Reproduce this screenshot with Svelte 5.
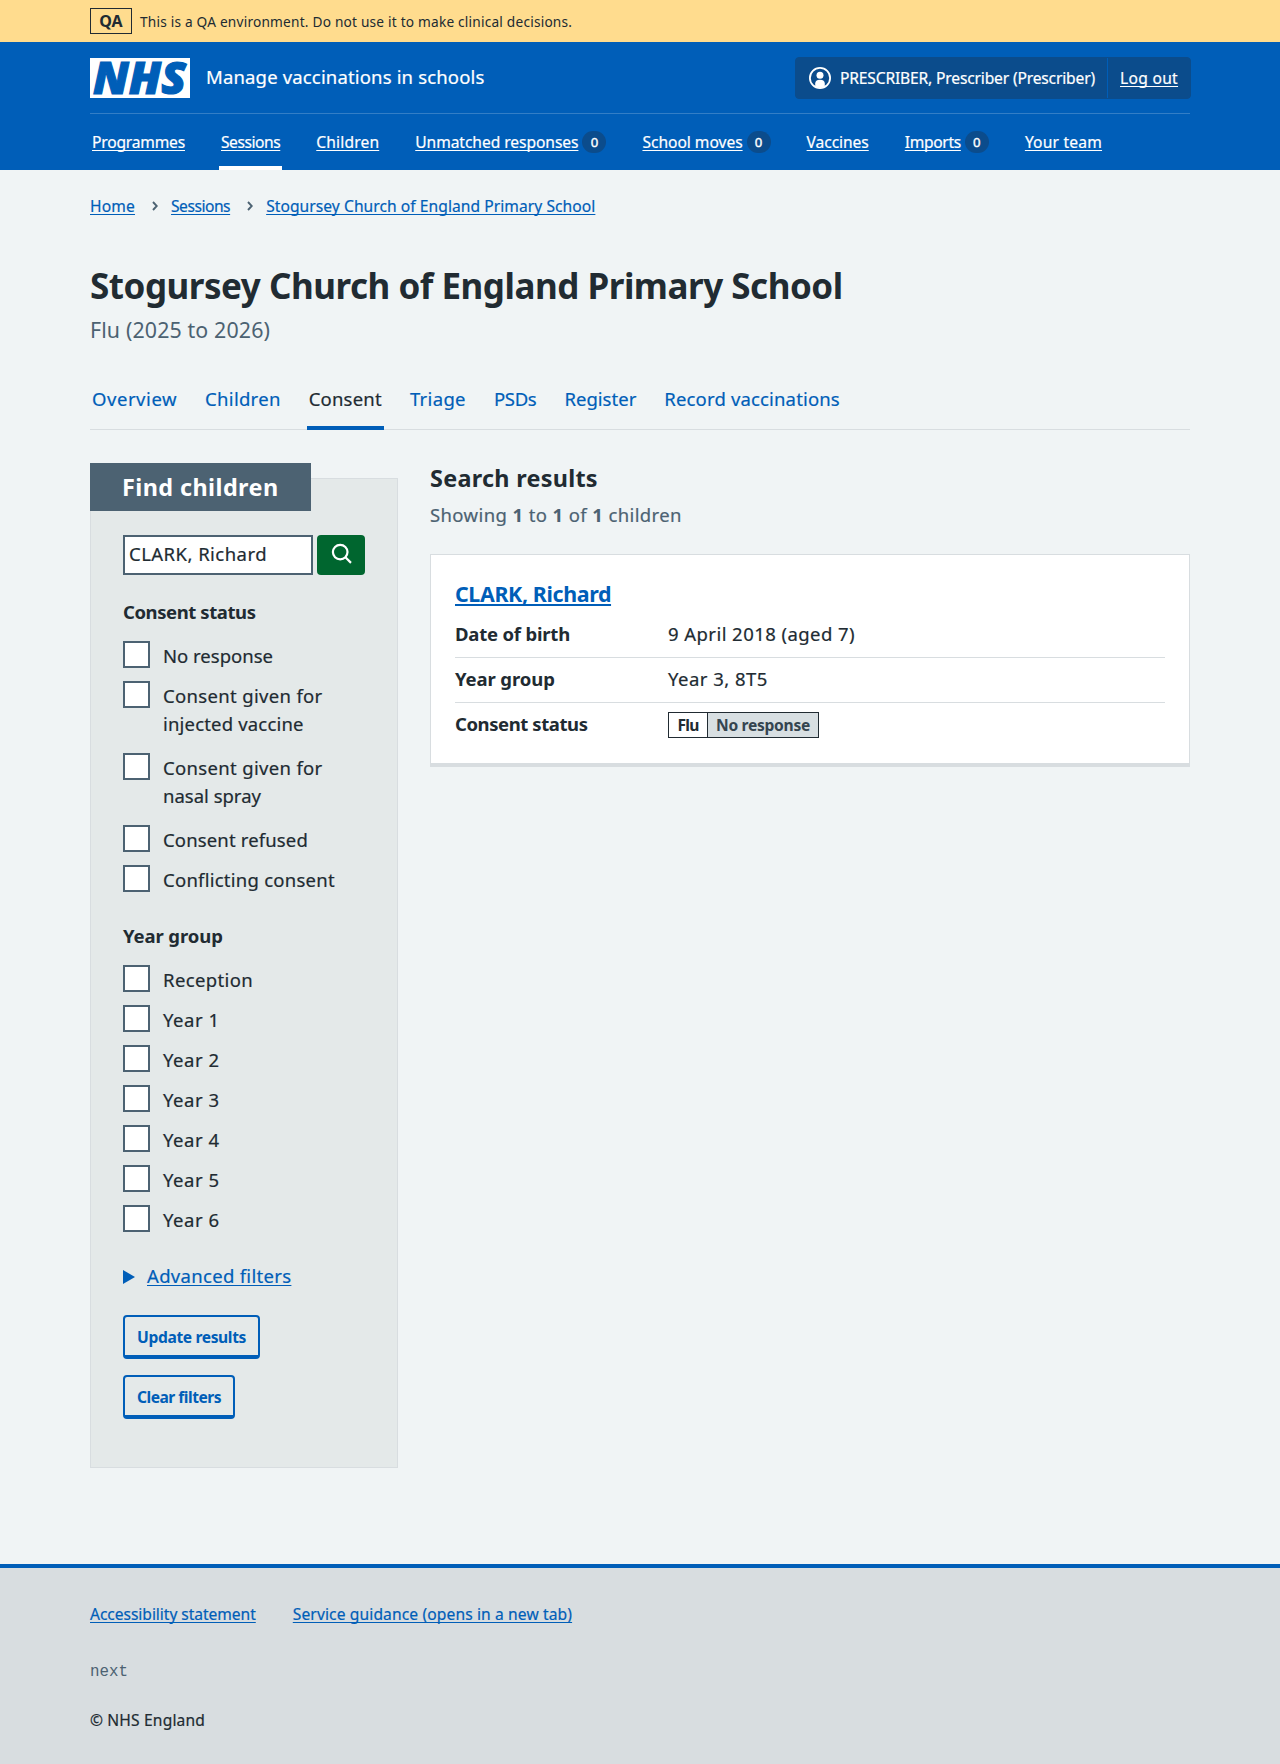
<script>
  const nav = [
    { label: 'Programmes' },
    { label: 'Sessions', current: true },
    { label: 'Children' },
    { label: 'Unmatched responses', count: 0 },
    { label: 'School moves', count: 0 },
    { label: 'Vaccines' },
    { label: 'Imports', count: 0 },
    { label: 'Your team' }
  ];
  const tabs = ['Overview', 'Children', 'Consent', 'Triage', 'PSDs', 'Register', 'Record vaccinations'];
  const crumbs = ['Home', 'Sessions', 'Stogursey Church of England Primary School'];
  const statuses = [
    { lines: ['No response'] },
    { lines: ['Consent given for', 'injected vaccine'] },
    { lines: ['Consent given for', 'nasal spray'] },
    { lines: ['Consent refused'] },
    { lines: ['Conflicting consent'] }
  ];
  const years = ['Reception', 'Year 1', 'Year 2', 'Year 3', 'Year 4', 'Year 5', 'Year 6'];
  let query = $state('CLARK, Richard');
</script>

<div class="page">
  <div class="banner">
    <div class="container banner-row">
      <strong class="env">QA</strong>
      <span class="env-text">This is a QA environment. Do not use it to make clinical decisions.</span>
    </div>
  </div>

  <header>
    <div class="container">
      <div class="header-top">
        <a class="brand" href="#home">
          <svg class="logo" viewBox="0 0 100 40" width="100" height="40" role="img" aria-label="NHS">
            <rect width="100" height="40" fill="#fff" />
            <text x="3" y="36.200" textLength="93" lengthAdjust="spacingAndGlyphs">NHS</text>
          </svg>
          <span class="service">Manage vaccinations in schools</span>
        </a>
        <div class="account">
          <div class="user">
            <svg viewBox="0 0 24 24" width="24" height="24" aria-hidden="true">
              <circle cx="12" cy="12" r="10.1" fill="none" stroke="#fff" stroke-width="1.8" />
              <circle cx="12" cy="9.2" r="3.5" fill="#fff" />
              <path d="M7.2 20.6v-3.2c0-2.3 1.6-3.7 4.8-3.7s4.8 1.4 4.8 3.7v3.2A10 10 0 0 1 12 22a10 10 0 0 1-4.800-1.400z" fill="#fff" />
            </svg>
            <span>PRESCRIBER, Prescriber (Prescriber)</span>
          </div>
          <a class="logout" href="#logout">Log out</a>
        </div>
      </div>
      <nav class="primary">
        {#each nav as item}
          <div class="nav-item" class:current={item.current}>
            <a href="#nav">{item.label}</a>
            {#if item.count !== undefined}<span class="count">{item.count}</span>{/if}
          </div>
        {/each}
      </nav>
    </div>
  </header>

  <main class="container">
    <nav class="crumbs">
      {#each crumbs as crumb, i}
        {#if i > 0}
          <svg viewBox="0 0 6 10" width="6" height="10" aria-hidden="true">
            <path d="M1 1l3.800 4-3.800 4" fill="none" stroke="#4c6272" stroke-width="1.900" />
          </svg>
        {/if}
        <a href="#crumb">{crumb}</a>
      {/each}
    </nav>

    <h1>Stogursey Church of England Primary School</h1>
    <p class="caption">Flu (2025 to 2026)</p>

    <nav class="tabs">
      {#each tabs as tab}
        <a class="tab" class:active={tab === 'Consent'} href="#tab">{tab}</a>
      {/each}
    </nav>

    <div class="columns">
      <section class="filters">
        <h2 class="filters-title">Find children</h2>
        <form class="filters-body" onsubmit={(e) => e.preventDefault()}>
          <div class="search">
            <input type="text" bind:value={query} aria-label="Search" />
            <button class="go" type="submit" aria-label="Search">
              <svg viewBox="0 0 22 22" width="22" height="22" aria-hidden="true">
                <circle cx="9.200" cy="9.100" r="7.300" />
                <path d="M14.400 14.300l5.600 5.600" />
              </svg>
            </button>
          </div>

          <h3>Consent status</h3>
          <ul class="checks status">
            {#each statuses as option}
              <li class:long={option.lines.length > 1}>
                <span class="box"></span>
                <span class="label">{#each option.lines as line}<span class="line">{line}</span>{/each}</span>
              </li>
            {/each}
          </ul>

          <h3 class="year-title">Year group</h3>
          <ul class="checks years">
            {#each years as year}
              <li><span class="box"></span><span class="label">{year}</span></li>
            {/each}
          </ul>

          <div class="advanced">
            <svg viewBox="0 0 12 14" width="12" height="14" aria-hidden="true"><path d="M0 0l12 7-12 7z" fill="#005eb8" /></svg>
            <a href="#advanced">Advanced filters</a>
          </div>

          <button class="secondary update" type="submit">Update results</button>
          <button class="secondary clear" type="reset">Clear filters</button>
        </form>
      </section>

      <section class="results">
        <h2>Search results</h2>
        <p class="showing">Showing <b>1</b> to <b>1</b> of <b>1</b> children</p>
        <article class="card">
          <h3><a href="#patient">CLARK, Richard</a></h3>
          <dl>
            <div class="row"><dt class="dob">Date of birth</dt><dd class="date">9 April 2018 (aged 7)</dd></div>
            <div class="row"><dt class="yg">Year group</dt><dd class="yr">Year 3, 8T5</dd></div>
            <div class="row">
              <dt class="cs">Consent status</dt>
              <dd><span class="tag"><b class="programme">Flu</b><b class="state">No response</b></span></dd>
            </div>
          </dl>
        </article>
      </section>
    </div>
  </main>

  <footer>
    <div class="container">
      <div class="footer-links">
        <a class="accessibility" href="#accessibility">Accessibility statement</a>
        <a class="guidance" href="#guidance">Service guidance (opens in a new tab)</a>
      </div>
      <div class="version">next</div>
      <div class="copyright">© NHS England</div>
    </div>
  </footer>
</div>

<style>
  :global(body) { background: #f0f4f5; }
  .page {
    font-family: "Noto Sans", "Open Sans", sans-serif;
    font-size: 18.5px;
    line-height: 28px;
    color: #212b32;
    background: #f0f4f5;
    -webkit-text-stroke-width: 0.2px;
  }
  .page * { box-sizing: border-box; }
  h1, h2, h3, b, strong, dt, .secondary, .version { -webkit-text-stroke-width: 0; }
  h1, h2, h3, p, ul, dl, dd { margin: 0; padding: 0; }
  ul { list-style: none; }
  a { color: #005eb8; text-decoration-thickness: 1px; text-underline-offset: 2px; text-decoration-skip-ink: none; }
  .container { width: 1100px; margin: 0 auto; }

  .banner { background: #ffdc8e; height: 42px; -webkit-text-stroke-width: 0; }
  .banner-row { display: flex; align-items: center; gap: 8px; height: 42px; font-size: 13.7px; letter-spacing: 0.2px; }
  .env { width: 42px; height: 26px; border: 1px solid #212b32; text-align: center; font-size: 16px; line-height: 24px; letter-spacing: 0; }
  .env-text { padding-top: 2px; }

  header { background: #005eb8; height: 128px; color: #fff; }
  header a { color: #fff; }
  .header-top { display: flex; justify-content: space-between; height: 72px; padding-top: 15px; border-bottom: 1px solid #337ec6; }
  .brand { display: flex; gap: 16px; padding-top: 1px; height: 41px; text-decoration: none; }
  .logo { display: block; overflow: visible; }
  .logo text { font: italic 900 45px "Noto Sans", sans-serif; fill: #005eb8; stroke: #005eb8; stroke-width: 1.2; }
  .service { line-height: 37px; letter-spacing: 0.16px; }
  .account { display: flex; width: 396px; height: 42px; margin-right: -1px; border-radius: 4px; background: #0b4c8c; border: 1px solid #0b4c8c; font-size: 15.6px; line-height: 41px; }
  .user { display: flex; align-items: center; gap: 8px; padding-left: 12px; width: 312px; border-right: 1px solid #005eb8; letter-spacing: -0.16px; white-space: nowrap; }
  .logout { padding-left: 12px; letter-spacing: 0.3px; }

  .primary { display: flex; gap: 32px; height: 56px; font-size: 15.6px; white-space: nowrap; }
  .nav-item { display: flex; align-items: center; gap: 4px; padding: 0 2px; height: 56px; border-top: 4px solid transparent; border-bottom: 4px solid transparent; }
  .nav-item.current { border-bottom-color: #fff; }
  .nav-item:nth-child(1) a { letter-spacing: -0.19px; }
  .nav-item:nth-child(2) a { letter-spacing: -0.45px; }
  .nav-item:nth-child(3) a { letter-spacing: 0.16px; }
  .nav-item:nth-child(4) a { letter-spacing: -0.06px; }
  .nav-item:nth-child(5) a { letter-spacing: -0.03px; }
  .nav-item:nth-child(6) a { letter-spacing: -0.07px; }
  .nav-item:nth-child(7) a { letter-spacing: -0.33px; }
  .nav-item:nth-child(8) a { letter-spacing: 0.2px; }
  .count { width: 24px; height: 22px; border-radius: 12px; background: #0b4c8c; text-align: center; font-size: 13.2px; line-height: 23px; -webkit-text-stroke-width: 0.4px; }

  .crumbs { display: flex; align-items: center; gap: 17px; margin-top: 24px; height: 24px; font-size: 15.6px; line-height: 24px; }
  .crumbs svg { margin-right: -4px; }
  .crumbs a:nth-of-type(1) { letter-spacing: 0.16px; }
  .crumbs a:nth-of-type(2) { letter-spacing: -0.47px; }
  .crumbs a:nth-of-type(3) { letter-spacing: 0.06px; }

  h1 { margin-top: 46px; font-size: 35px; line-height: 44px; letter-spacing: -0.48px; }
  .caption { margin-top: 6px; font-size: 21.4px; line-height: 32px; letter-spacing: 0.12px; color: #4c6272; -webkit-text-stroke-width: 0; }

  .tabs { display: flex; gap: 24px; margin-top: 22px; height: 62px; border-bottom: 1px solid #d8dde0; }
  .tab { height: 62px; padding: 17px 2px 0; border-bottom: 4px solid transparent; text-decoration: none; letter-spacing: 0.16px; white-space: nowrap; }
  .tab:nth-child(1) { letter-spacing: 0.55px; }
  .tab:nth-child(2) { letter-spacing: 0.29px; }
  .tab:nth-child(3) { letter-spacing: 0.22px; }
  .tab:nth-child(4) { letter-spacing: 0.34px; }
  .tab:nth-child(5) { letter-spacing: -0.3px; }
  .tab:nth-child(6) { letter-spacing: 0.02px; }
  .tab.active { color: #212b32; border-bottom-color: #005eb8; }

  .columns { display: flex; align-items: flex-start; gap: 32px; margin-top: 33px; }
  .filters { width: 308px; height: 990px; margin-top: 15px; border: 1px solid #d8dde0; background: #e4e9e9; }
  .filters-title { width: 221px; height: 48px; margin: -16px 0 0 -1px; padding-left: 32px; background: #4c6272; color: #fff; font-size: 23.4px; line-height: 48px; letter-spacing: 0.42px; }
  .filters-body { padding: 24px 32px 0; }
  .search { display: flex; gap: 4px; }
  input { width: 190px; height: 40px; margin: 0; padding: 0 4px 3px; border: 2px solid #4c6272; border-radius: 0; background: #fff; color: #212b32; font: inherit; letter-spacing: 0.46px; }
  .go { display: flex; justify-content: center; width: 48px; height: 40px; padding: 8px 0 0 1px; border: 0; border-radius: 4px; background: #00662f; }
  .go svg { fill: none; stroke: #fff; stroke-width: 2.2; }
  .filters h3 { margin-top: 23px; font-size: 18.5px; line-height: 28px; letter-spacing: -0.42px; }
  .filters .year-title { margin-top: 28px; letter-spacing: -0.1px; }
  .checks { display: flex; flex-direction: column; gap: 12px; margin-top: 16px; }
  .checks li { display: flex; align-items: flex-start; gap: 13px; letter-spacing: 0.25px; }
  .checks .long { padding-bottom: 4px; }
  .status li:nth-child(1) { letter-spacing: 0; }
  .status li:nth-child(4) { letter-spacing: 0.15px; }
  .status .long .line:first-child { letter-spacing: 0.33px; }
  .status .long .line:last-child { letter-spacing: 0.18px; }
  .status .long:nth-child(3) .line:last-child { letter-spacing: 0; }
  .box { width: 27px; height: 27px; margin-top: -1px; border: 2px solid #4c6272; background: #fff; }
  .line { display: block; }
  .years li { letter-spacing: 0.55px; }
  .years li:first-child { letter-spacing: 0.37px; }
  .advanced { display: flex; align-items: center; gap: 12px; margin-top: 28px; letter-spacing: 0.31px; }
  .advanced svg { margin-top: 2px; }
  .secondary { display: block; height: 44px; margin: 0; padding: 1px 0 0; border: 2px solid #005eb8; border-bottom-width: 4px; border-radius: 4px; background: transparent; color: #005eb8; font: 700 15.6px/24px "Noto Sans", sans-serif; }
  .update { width: 137px; margin-top: 25px; letter-spacing: -0.37px; }
  .clear { width: 112px; margin-top: 16px; letter-spacing: -0.5px; }

  .results { width: 760px; margin-top: -1px; }
  .results h2 { font-size: 23.4px; line-height: 32px; letter-spacing: 0.28px; }
  .showing { margin-top: 7px; color: #4c6272; letter-spacing: 0.39px; }
  .card { height: 213px; margin-top: 25px; padding: 23px 24px 0; border: 1px solid #d8dde0; border-bottom-width: 4px; background: #fff; }
  .card h3 { font-size: 21.4px; line-height: 32px; letter-spacing: -0.37px; }
  .card h3 a { text-decoration-thickness: 2px; }
  dl { margin-top: 10px; }
  .row { display: flex; height: 45px; padding-top: 7px; border-bottom: 1px solid #d8dde0; }
  .row:first-child { height: 38px; padding-top: 0; }
  .row:last-child { border-bottom: 0; }
  dt { width: 213px; font-weight: 700; }
  .dob { letter-spacing: -0.2px; }
  .yg { letter-spacing: -0.1px; }
  .cs { letter-spacing: -0.42px; }
  .date { letter-spacing: 0.44px; }
  .yr { letter-spacing: 0.47px; }
  .tag { display: flex; width: 151px; height: 26px; margin-top: 2px; border: 1px solid #212b32; font-size: 15.6px; line-height: 25px; text-align: center; white-space: nowrap; }
  .programme { width: 39px; border-right: 1px solid #212b32; letter-spacing: -0.7px; }
  .state { flex: 1; background: #d8dfe2; color: #354550; letter-spacing: -0.29px; }

  footer { height: 200px; margin-top: 96px; padding-top: 34px; border-top: 4px solid #005eb8; background: #d8dde0; font-size: 15.6px; line-height: 24px; }
  .footer-links { display: flex; gap: 37px; }
  .accessibility { letter-spacing: -0.05px; }
  .guidance { letter-spacing: 0.12px; }
  .version { margin-top: 34px; font-family: "Liberation Mono", monospace; font-size: 15.8px; color: #4c6272; }
  .copyright { margin-top: 24px; letter-spacing: 0.16px; }
</style>
